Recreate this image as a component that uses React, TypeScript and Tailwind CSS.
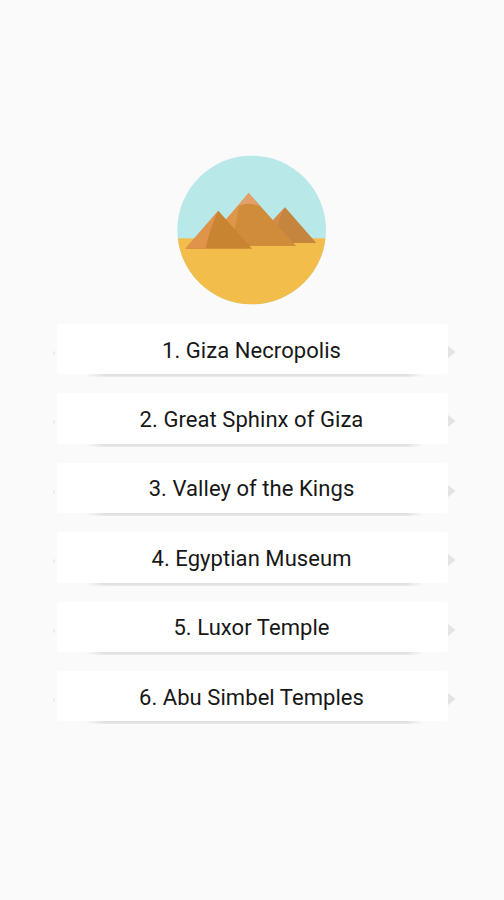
import React from 'react';

interface Attraction {
  id: number;
  name: string;
}

const attractions: Attraction[] = [
  { id: 1, name: 'Giza Necropolis' },
  { id: 2, name: 'Great Sphinx of Giza' },
  { id: 3, name: 'Valley of the Kings' },
  { id: 4, name: 'Egyptian Museum' },
  { id: 5, name: 'Luxor Temple' },
  { id: 6, name: 'Abu Simbel Temples' },
];

const PyramidsLogo: React.FC = () => (
  <svg className="w-[164px] h-[164px]" viewBox="0 0 492 492" aria-hidden="true">
    <defs>
      <clipPath id="disc">
        <circle cx="245" cy="246" r="223" />
      </clipPath>
    </defs>
    <g clipPath="url(#disc)">
      <rect width="492" height="492" fill="#b8e8e8" />
      <rect y="271" width="492" height="222" fill="#f2bd4b" />
    </g>
    {/* right */}
    <path d="M345 178L439 285H250Z" fill="#c5853f" />
    <path d="M345 178L303 222L320 246Q328 208 345 178Z" fill="#d38a4b" />
    {/* middle */}
    <path d="M236 135L378 294H110Z" fill="#cf8c3b" />
    <path d="M236 135L150 235L190 260Q201 215 207 174Z" fill="#e0964a" />
    <path d="M236 135L205 174Q237 161 268 174Z" fill="#e5a06a" />
    {/* left */}
    <path d="M145 188L246 302H46Z" fill="#c98431" />
    <path d="M145 188L46 302H107Q119 240 145 188Z" fill="#e0934a" />
  </svg>
);

const AttractionItem: React.FC<{ attraction: Attraction }> = ({ attraction }) => (
  <div className="relative h-[50.4px] w-[391px]">
    {/* shadow edges that show around the card */}
    <span className="absolute -bottom-[3px] left-[28px] h-[5px] w-[338px] rounded-full bg-linear-to-r from-transparent via-[#e0e0e0] from-0% via-6% to-[#e0e0e0] to-94% mask-r-from-95% mask-r-to-100% blur-[0.8px]" />
    <span className="absolute -left-[4px] top-[27px] h-[4px] w-[2px] rounded-full bg-[#eeeeee]" />
    <svg className="absolute left-[390px] top-[21px] h-[14px] w-[9px] blur-[0.5px]" viewBox="0 0 9 14" aria-hidden="true">
      <path d="M0 0L8.5 7L0 14Z" fill="#e4e4e4" />
    </svg>
    <button className="relative flex h-full w-full items-center justify-center rounded-[3px] bg-white pt-[3px] pr-px text-[22px] leading-none tracking-[0.06px] text-[#171717]">
      {attraction.id}. {attraction.name}
    </button>
  </div>
);

const App: React.FC = () => {
  return (
    <div className="flex h-[900px] w-[504px] flex-col items-center bg-[#fafafa] pt-[148px] font-['Roboto',sans-serif]">
      <PyramidsLogo />
      <div className="mt-[12px] flex flex-col gap-[19px]">
        {attractions.map((attraction) => (
          <AttractionItem key={attraction.id} attraction={attraction} />
        ))}
      </div>
    </div>
  );
};

export default App;
